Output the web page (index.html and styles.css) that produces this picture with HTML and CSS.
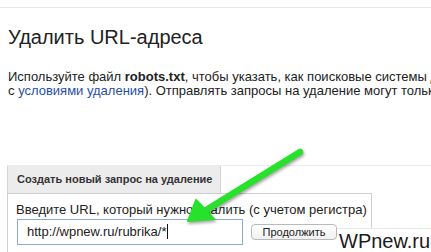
FILE: index.html
```html
<!DOCTYPE html>
<html lang="ru">
<head>
    <meta charset="UTF-8">
    <title>Удалить URL-адреса</title>
    <link rel="stylesheet" href="styles.css">
</head>
<body>
    <div class="topbar"></div>
    <div class="content">
        <h1>Удалить URL-адреса</h1>
        <p class="intro">
            Используйте файл <b>robots.txt</b>, чтобы указать, как поисковые системы должны сканировать ваш сайт, или запросите удаление<br>
            с <a href="#">условиями удаления</a>). Отправлять запросы на удаление могут только владельцы сайта.
        </p>

        <div class="tabs">
            <div class="tab">Создать новый запрос на удаление</div>
        </div>
        <div class="panel">
            <div class="panel-label">Введите URL, который нужно удалить (с учетом регистра)</div>
            <div class="panel-row">
                <div class="url-input">http://wpnew.ru/rubrika/*<span class="caret"></span></div>
                <button class="btn">Продолжить</button>
            </div>
        </div>
    </div>

    <!-- annotation arrow -->
    <svg class="arrow" width="431" height="252" viewBox="0 0 431 252">
        <g class="arrow-shape">
            <line x1="300" y1="152" x2="203" y2="212" stroke="#27e22b" stroke-width="6.5" stroke-linecap="round"/>
            <polygon points="188,221 196,200 214,219" fill="#27e22b" stroke="#27e22b" stroke-width="2" stroke-linejoin="round"/>
        </g>
    </svg>

    <div class="watermark">WPnew.ru</div>
</body>
</html>
```

FILE: styles.css
```css
body {
    font-family: "Liberation Sans", Arial, sans-serif;
    color: #222;
    background: #fff;
    margin: 0;
    padding: 0;
    width: 431px;
    height: 252px;
    overflow: hidden;
    position: relative;
}

.topbar {
    height: 7px;
    border-bottom: 1px solid #e5e5e5;
}

.content {
    padding: 0 0 0 7px;
}

h1 {
    font-size: 20px;
    font-weight: normal;
    line-height: 24px;
    margin: 17px 0 0 1px;
    color: #222;
}

.intro {
    font-size: 13px;
    line-height: 14px;
    margin: 21px 0 0 1px;
    white-space: nowrap;
}

.intro a {
    color: #1f4fa8;
    text-decoration: none;
}

.tabs {
    margin-top: 67px;
    border-top: 1px solid #ebebeb;
    display: flex;
}

.tab {
    background: #ececec;
    border: 1px solid #d4d4d4;
    border-top: none;
    border-bottom: none;
    width: 203px;
    height: 27px;
    line-height: 27px;
    padding-left: 9px;
    font-size: 11px;
    font-weight: bold;
    color: #333;
    white-space: nowrap;
}

.panel {
    width: 347px;
    border: 1px solid #cfcfcf;
    padding: 8px 8px 20px 8px;
    background: #fff;
}

.panel-label {
    font-size: 13px;
    line-height: 16px;
    white-space: nowrap;
}

.panel-row {
    display: flex;
    align-items: center;
    gap: 8px;
    margin-left: 1px;
    margin-top: 1px;
}

.url-input {
    width: 215px;
    height: 24px;
    line-height: 24px;
    border: 1px solid #8fa9d6;
    padding-left: 9px;
    font-size: 13px;
    color: #222;
    white-space: nowrap;
}

.caret {
    display: inline-block;
    width: 1px;
    height: 15px;
    background: #111;
    vertical-align: -3px;
    margin-left: 1px;
}

.btn {
    font-family: "Liberation Sans", Arial, sans-serif;
    font-size: 11px;
    color: #222;
    background: linear-gradient(#fff, #f1f1f1);
    border: 1px solid #b9b9b9;
    border-radius: 4px;
    height: 16px;
    width: 86px;
    padding: 0;
    line-height: 14px;
}

.arrow {
    position: absolute;
    left: 0;
    top: 0;
}

.arrow-shape {
    filter: drop-shadow(1px 2px 1.5px rgba(0, 0, 0, 0.35));
}

.watermark {
    position: absolute;
    left: 337px;
    top: 228px;
    right: 0;
    bottom: 0;
    background: #fff;
    border-top: 1px solid #e8e8e8;
    font-size: 20px;
    line-height: 24px;
    padding-left: 2px;
    color: #1a1a1a;
    white-space: nowrap;
}
```
